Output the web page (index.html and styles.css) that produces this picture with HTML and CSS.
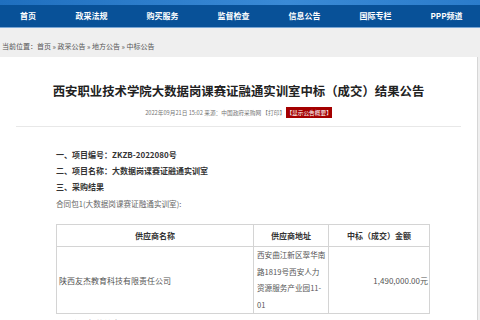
FILE: index.html
```html
<!DOCTYPE html>
<html lang="zh-CN">
<head>
    <meta charset="UTF-8">
    <title>西安职业技术学院大数据岗课赛证融通实训室中标（成交）结果公告</title>
    <link rel="stylesheet" href="styles.css">
</head>
<body>
<div class="top-band"></div>
<div class="nav">
    <a class="nav__item nav__item--first">首页</a>
    <a class="nav__item">政采法规</a>
    <a class="nav__item">购买服务</a>
    <a class="nav__item">监督检查</a>
    <a class="nav__item">信息公告</a>
    <a class="nav__item">国际专栏</a>
    <a class="nav__item">PPP频道</a>
</div>
<div class="crumb">当前位置：首页 » 政采公告 » 地方公告 » 中标公告</div>

<div class="panel">
    <h2 class="title">西安职业技术学院大数据岗课赛证融通实训室中标（成交）结果公告</h2>
    <p class="meta">2022年09月21日 15:02 来源：中国政府采购网 【打印】 <span class="meta__badge">【显示公告概要】</span></p>
    <div class="rule"></div>

    <div class="content">
        <p class="item">一、项目编号：ZKZB-2022080号</p>
        <p class="item">二、项目名称：大数据岗课赛证融通实训室</p>
        <p class="item">三、采购结果</p>
        <p class="note">合同包1(大数据岗课赛证融通实训室):</p>

        <table class="result">
            <colgroup>
                <col class="col-name">
                <col class="col-addr">
                <col class="col-sum">
            </colgroup>
            <tr>
                <th>供应商名称</th>
                <th>供应商地址</th>
                <th>中标（成交）金额</th>
            </tr>
            <tr>
                <td>陕西友杰教育科技有限责任公司</td>
                <td class="addr">西安曲江新区翠华南路1819号西安人力资源服务产业园11-01</td>
                <td class="sum">1,490,000.00元</td>
            </tr>
        </table>

        <p class="item">四、主要标的信息</p>
    </div>
</div>
</body>
</html>
```

FILE: styles.css
```css
html, body {
    margin: 0;
    overflow: hidden;
}

body {
    background: #efefef;
    font-family: "Noto Sans CJK SC", "Noto Sans", sans-serif;
    color: #333;
}

p, h2 {
    margin: 0;
}

.top-band {
    height: 5px;
    background: linear-gradient(to right, #1f6fbf, #3a8ad6 60%, #2b7ccb);
}

.nav {
    display: flex;
    height: 22px;
    background: #085198;
    border-bottom: 1px solid #7aa6d4;
}

.nav__item {
    width: 71px;
    flex: none;
    text-align: center;
    line-height: 22px;
    font-size: 8px;
    font-weight: bold;
    color: #fff;
}

.nav__item--first {
    width: 56px;
}

.crumb {
    height: 17px;
    padding: 12px 0 0 2px;
    line-height: 12px;
    font-size: 7px;
    color: #555;
}

.panel {
    background: #fff;
    margin-right: 2px;
    border-right: 1px solid #d6d6d6;
    padding-top: 26px;
    padding-bottom: 40px;
}

.title {
    text-align: center;
    font-size: 12.4px;
    line-height: 16px;
    font-weight: bold;
    color: #222;
}

.meta {
    margin-top: 9px;
    text-align: center;
    font-size: 5.7px;
    line-height: 10px;
    color: #777;
}

.meta__badge {
    background: #a40000;
    color: #fff;
    padding: 1px 0;
}

.rule {
    margin: 8px 16px 0;
    height: 1px;
    background: #e8e8e8;
}

.content {
    padding: 20px 0 0 56px;
}

.item {
    font-size: 8px;
    line-height: 16px;
    font-weight: bold;
    color: #333;
}

.note {
    font-size: 7.6px;
    line-height: 16px;
    color: #666;
    margin-top: 1px;
}

.result {
    margin: 12px 0 2px;
    width: 374px;
    table-layout: fixed;
    border-collapse: collapse;
    border: 1px solid #c8c8c8;
    font-size: 8px;
    color: #555;
}

.col-name {
    width: 197px;
}

.col-addr {
    width: 75px;
}

.result th, .result td {
    border: 1px solid #d4d4d4;
    padding: 0 2px;
}

.result th {
    height: 21px;
    font-weight: bold;
    color: #333;
}

.result .addr {
    font-size: 7.6px;
    line-height: 16.5px;
    padding: 0 2px 0 3px;
}

.result .sum {
    text-align: right;
    padding-right: 1px;
}
```
